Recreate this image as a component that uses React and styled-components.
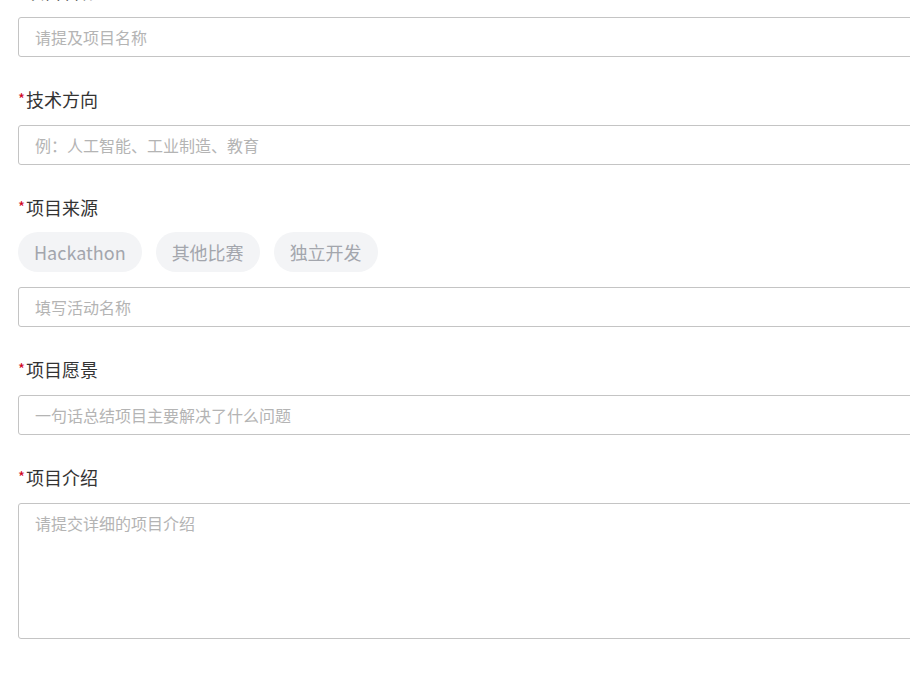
import React from "react";
import styled, { createGlobalStyle } from "styled-components";

const Global = createGlobalStyle`
  html, body { margin: 0; padding: 0; background: #fff; overflow: hidden; }
  body { font-family: "Microsoft YaHei", "Noto Sans CJK SC", "Noto Sans", sans-serif; }
  * { box-sizing: border-box; }
`;

const Form = styled.form`
  width: 1000px;
  margin-top: -20px;
  padding-left: 18px;
  display: flex;
  flex-direction: column;
  gap: 31px;
`;

const Field = styled.div`
  display: flex;
  flex-direction: column;
`;

const Label = styled.label`
  display: block;
  height: 24px;
  line-height: 22px;
  font-size: 18px;
  color: #333;
  margin-bottom: 13px;
  white-space: nowrap;
`;

const Star = styled.span`
  color: #d0021b;
  font-size: 15px;
  vertical-align: 2px;
  margin-right: 1px;
`;

const Input = styled.input`
  display: block;
  width: 100%;
  height: 40px;
  border: 1px solid #c4c4c4;
  border-radius: 3px;
  padding: 0 16px;
  font-family: inherit;
  font-size: 16px;
  color: #333;
  outline: none;
  background: #fff;
  &::placeholder { color: #b4b4b4; }
`;

const TextArea = styled.textarea`
  display: block;
  width: 100%;
  height: 136px;
  border: 1px solid #c4c4c4;
  border-radius: 3px;
  padding: 7px 16px;
  font-family: inherit;
  font-size: 16px;
  line-height: 24px;
  color: #333;
  outline: none;
  resize: none;
  background: #fff;
  &::placeholder { color: #b4b4b4; }
`;

const ChipRow = styled.div`
  display: flex;
  gap: 14px;
  margin-top: -1px;
  margin-bottom: 15px;
`;

const Chip = styled.button`
  height: 40px;
  padding: 0 16px;
  border: none;
  border-radius: 20px;
  background: #f3f4f6;
  color: #a3a6ad;
  font-family: inherit;
  font-size: 18px;
  line-height: 40px;
  cursor: pointer;
`;

const FieldLabel = ({ children }) => (
  <Label>
    <Star>*</Star>
    {children}
  </Label>
);

export default function App() {
  return (
    <>
      <Global />
      <Form onSubmit={(e) => e.preventDefault()}>
        <Field>
          <FieldLabel>项目名称</FieldLabel>
          <Input placeholder="请提及项目名称" />
        </Field>
        <Field>
          <FieldLabel>技术方向</FieldLabel>
          <Input placeholder="例：人工智能、工业制造、教育" />
        </Field>
        <Field>
          <FieldLabel>项目来源</FieldLabel>
          <ChipRow>
            <Chip type="button">Hackathon</Chip>
            <Chip type="button">其他比赛</Chip>
            <Chip type="button">独立开发</Chip>
          </ChipRow>
          <Input placeholder="填写活动名称" />
        </Field>
        <Field>
          <FieldLabel>项目愿景</FieldLabel>
          <Input placeholder="一句话总结项目主要解决了什么问题" />
        </Field>
        <Field>
          <FieldLabel>项目介绍</FieldLabel>
          <TextArea placeholder="请提交详细的项目介绍" />
        </Field>
      </Form>
    </>
  );
}
